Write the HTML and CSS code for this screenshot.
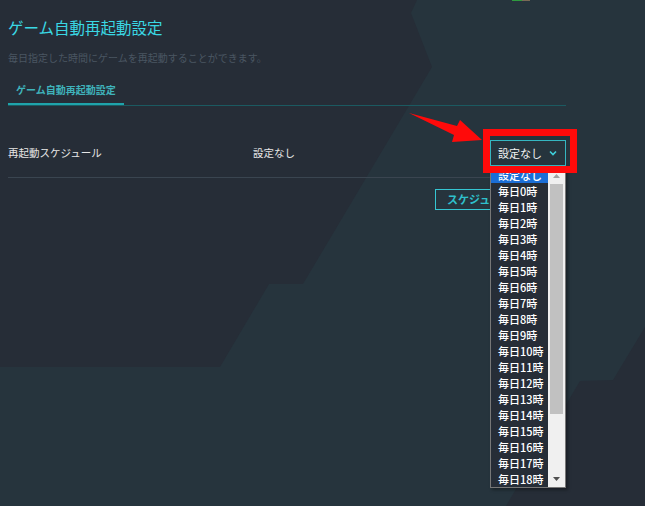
FILE: index.html
```html
<!DOCTYPE html>
<html lang="ja">
<head>
<meta charset="utf-8">
<title>ゲーム自動再起動設定</title>
<link rel="stylesheet" href="styles.css">
</head>
<body>
<svg class="bg" width="645" height="506" viewBox="0 0 645 506" aria-hidden="true">
  <polygon points="0,0 417,0 411,13 432,67 303,284 269,284 220,367 0,367" fill="#262d37"/>
  <polygon points="645,327 613,380 580,381 506,506 645,506" fill="#262d37"/>
</svg>
<div class="topdeco"><span class="deco-g"></span><span class="deco-b"></span></div>

<main class="page">
  <h1 class="title">ゲーム自動再起動設定</h1>
  <p class="desc">毎日指定した時間にゲームを再起動することができます。</p>

  <div class="tabs">
    <div class="tab active">ゲーム自動再起動設定</div>
  </div>

  <div class="row">
    <div class="label">再起動スケジュール</div>
    <div class="value">設定なし</div>
    <div class="select-wrap">
      <div class="select">
        <span>設定なし</span>
        <svg class="chev" width="8" height="6" viewBox="0 0 8 6"><polyline points="1,1.5 4,4.5 7,1.5" fill="none" stroke="#3fd0dc" stroke-width="1.6"/></svg>
      </div>
      <div class="listbox">
        <div class="options">
          <div class="opt selected">設定なし</div>
          <div class="opt">毎日0時</div>
          <div class="opt">毎日1時</div>
          <div class="opt">毎日2時</div>
          <div class="opt">毎日3時</div>
          <div class="opt">毎日4時</div>
          <div class="opt">毎日5時</div>
          <div class="opt">毎日6時</div>
          <div class="opt">毎日7時</div>
          <div class="opt">毎日8時</div>
          <div class="opt">毎日9時</div>
          <div class="opt">毎日10時</div>
          <div class="opt">毎日11時</div>
          <div class="opt">毎日12時</div>
          <div class="opt">毎日13時</div>
          <div class="opt">毎日14時</div>
          <div class="opt">毎日15時</div>
          <div class="opt">毎日16時</div>
          <div class="opt">毎日17時</div>
          <div class="opt">毎日18時</div>
        </div>
        <div class="scrollbar">
          <div class="sb-btn"><svg width="7" height="4" viewBox="0 0 7 4"><polygon points="0,4 7,4 3.5,0" fill="#a0a0a0"/></svg></div>
          <div class="sb-track"><div class="sb-thumb"></div></div>
          <div class="sb-btn"><svg width="7" height="4" viewBox="0 0 7 4"><polygon points="0,0 7,0 3.5,4" fill="#505050"/></svg></div>
        </div>
      </div>
    </div>
  </div>

  <div class="actions">
    <button class="btn">スケジュールを保存</button>
  </div>
</main>

<div class="highlight"></div>
<svg class="arrow" width="80" height="36" viewBox="405 110 80 36" aria-hidden="true">
  <polygon points="409,113 457,126 460,120 482,140 452,142 454,135" fill="#ff0a0a"/>
</svg>
</body>
</html>
```

FILE: styles.css
```css
* { box-sizing: border-box; }

html, body {
  margin: 0;
  padding: 0;
}

body {
  width: 645px;
  height: 506px;
  overflow: hidden;
  position: relative;
  background: #26343d;
  font-family: "Noto Sans CJK JP", "Noto Sans", sans-serif;
  color: #e6e6e6;
}

.bg {
  position: absolute;
  left: 0;
  top: 0;
  z-index: 0;
}

.topdeco {
  position: absolute;
  left: 512px;
  top: 0;
  display: flex;
  z-index: 0;
}
.deco-g { width: 10px; height: 1px; background: #2f9a3f; }
.deco-b { width: 8px; height: 1px; background: #7a6a55; }

.page {
  position: relative;
  z-index: 1;
  width: 566px;
  padding: 16px 0 0 8px;
}

.title {
  margin: 0;
  font-size: 15.5px;
  line-height: 22px;
  font-weight: 400;
  color: #3ad8e4;
}

.desc {
  margin: 13px 0 0;
  font-size: 10px;
  line-height: 14px;
  color: #4a5662;
}

.tabs {
  margin-top: 12px;
  display: flex;
  border-bottom: 1px solid #1b5a61;
}

.tab {
  padding: 6px 8px 6px;
  font-size: 10px;
  line-height: 14px;
  font-weight: 700;
  color: #3fb3bb;
  border-bottom: 2px solid transparent;
}
.tab.active { border-bottom-color: #1fa3ab; }

.row {
  display: flex;
  align-items: center;
  padding: 34px 0 11px;
  border-bottom: 1px solid #3a4550;
}

.label {
  width: 245px;
  font-size: 10.5px;
  line-height: 14px;
}

.value {
  flex: 1;
  font-size: 10.5px;
  line-height: 14px;
}

.select-wrap {
  position: relative;
  width: 76px;
}

.select {
  height: 26px;
  border: 1px solid #35b6c1;
  display: flex;
  align-items: center;
  justify-content: space-between;
  padding: 0 8px 0 7px;
  font-size: 11px;
  color: #f2f2f2;
}

.chev { display: block; margin-top: -1px; }

.listbox {
  position: absolute;
  left: 0;
  top: 100%;
  width: 76px;
  height: 322px;
  border: 1px solid #777;
  background: #262d37;
  display: flex;
  box-shadow: 2px 2px 3px rgba(0,0,0,0.35);
  z-index: 5;
}

.options {
  flex: 1;
  overflow: hidden;
}

.opt {
  height: 16px;
  line-height: 16px;
  padding-left: 7px;
  font-size: 11px;
  font-weight: 500;
  color: #ffffff;
  white-space: nowrap;
}
.opt.selected { background: #1b6ed6; }

.scrollbar {
  width: 17px;
  background: #f0f0f0;
  display: flex;
  flex-direction: column;
}

.sb-btn {
  height: 17px;
  display: flex;
  align-items: center;
  justify-content: center;
}

.sb-track {
  flex: 1;
  padding: 0 2px;
}

.sb-thumb {
  height: 230px;
  background: #c1c1c1;
}

.actions {
  display: flex;
  justify-content: flex-end;
  margin-top: 11px;
}

.btn {
  width: 131px;
  height: 21px;
  padding: 0 0 0 11px;
  background: transparent;
  border: 1px solid #35c6d2;
  color: #2fc0cc;
  font-family: inherit;
  font-size: 11px;
  font-weight: 700;
  line-height: 19px;
  text-align: left;
  white-space: nowrap;
}

.highlight {
  position: absolute;
  left: 483px;
  top: 129px;
  width: 94px;
  height: 44px;
  border: 7px solid #ff0a0a;
  z-index: 10;
}

.arrow {
  position: absolute;
  left: 405px;
  top: 110px;
  z-index: 10;
}
```
